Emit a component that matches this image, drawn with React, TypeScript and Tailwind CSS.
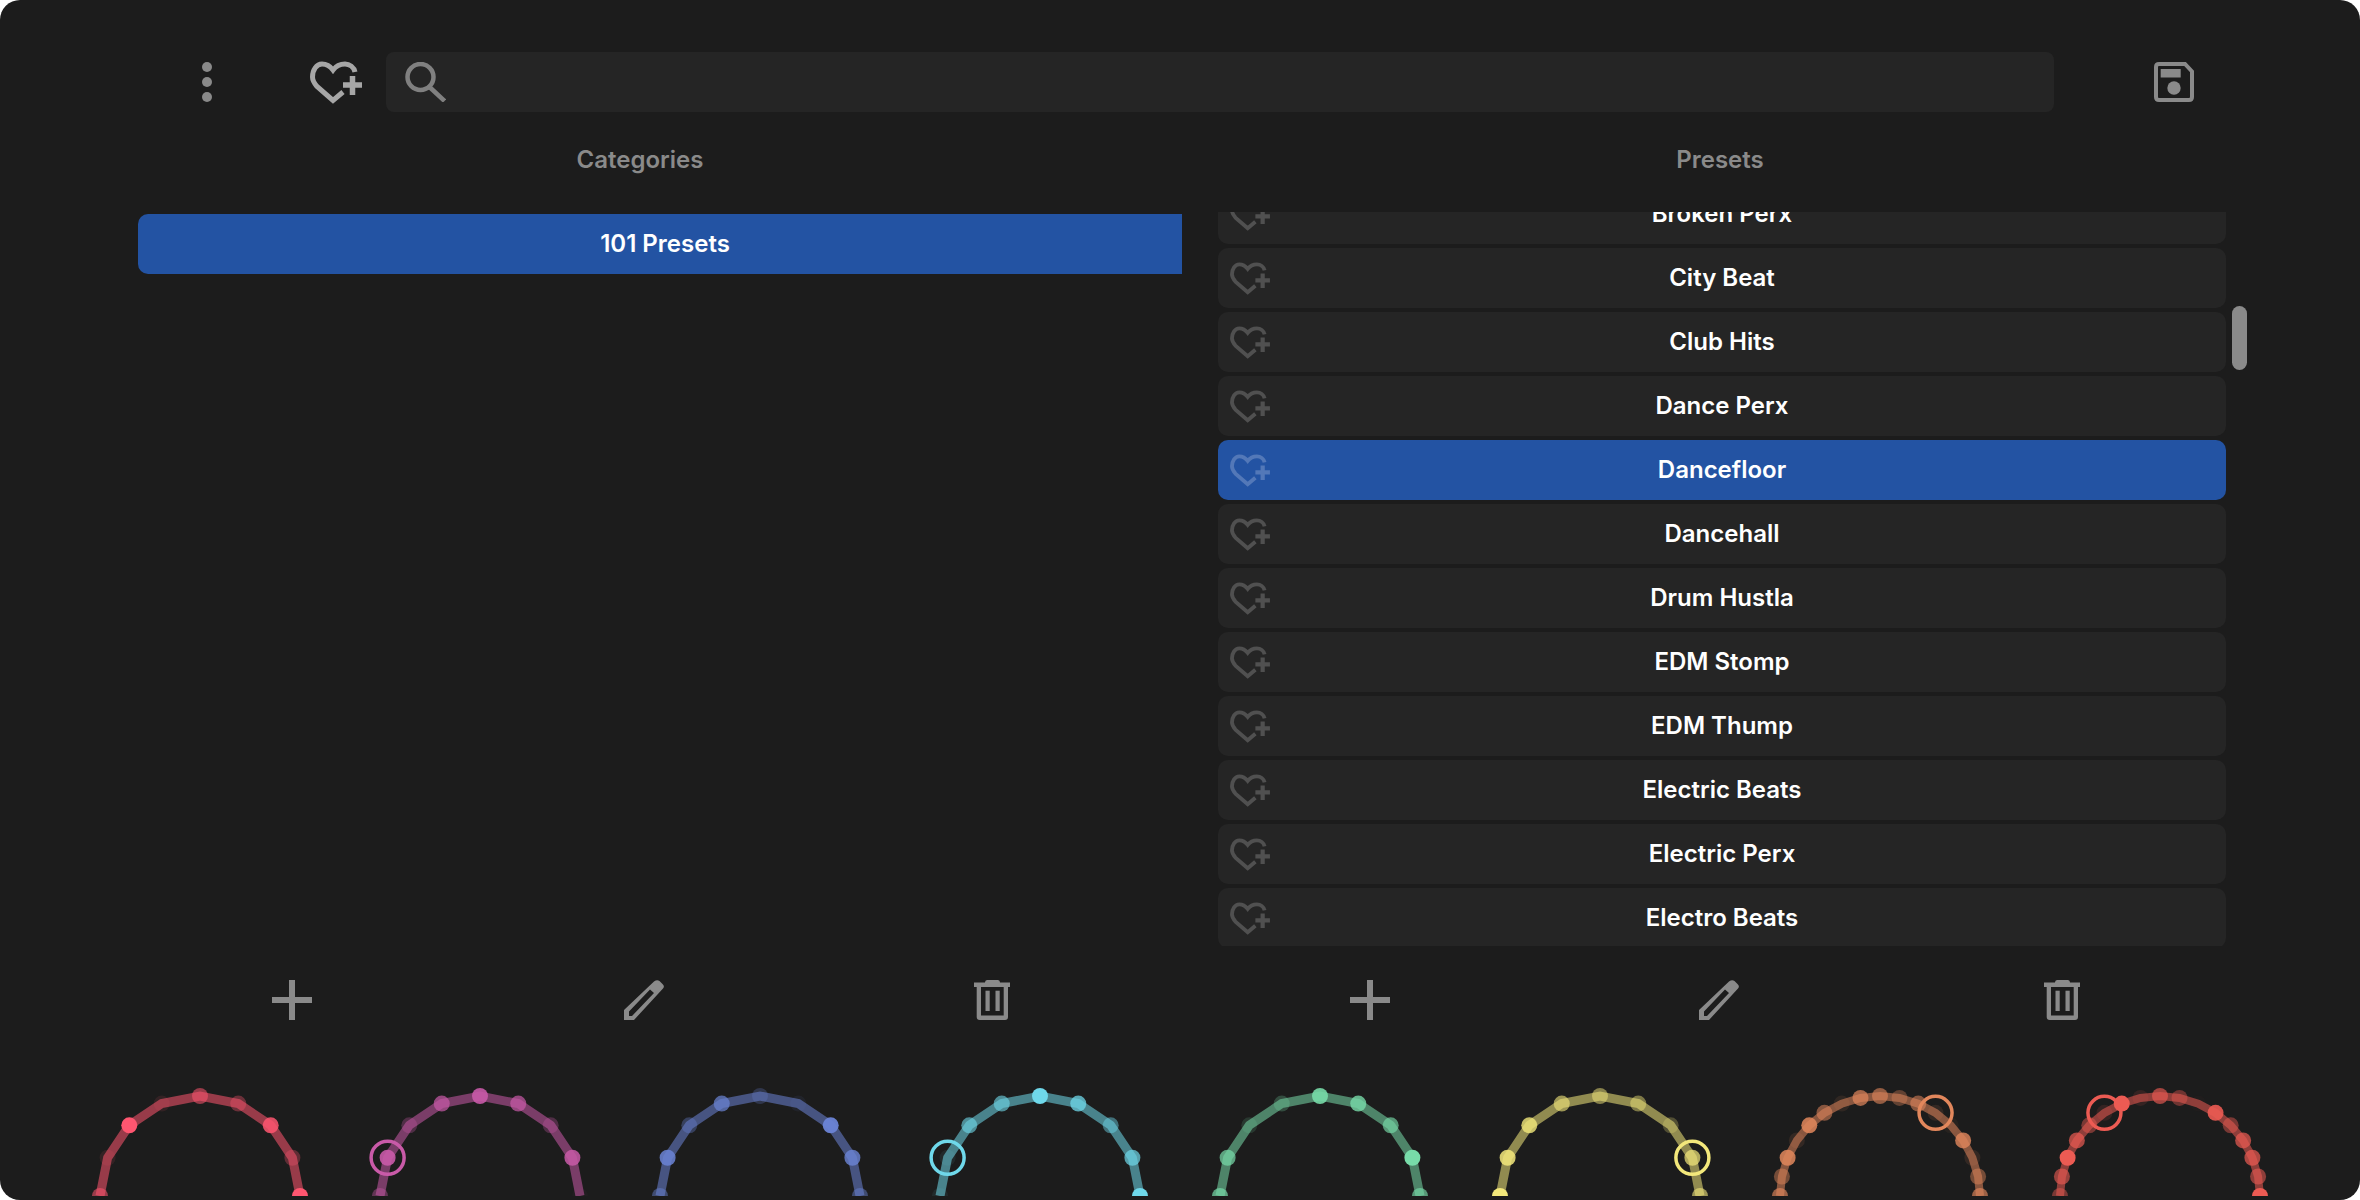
const presets = [
  "Broken Perx",
  "City Beat",
  "Club Hits",
  "Dance Perx",
  "Dancefloor",
  "Dancehall",
  "Drum Hustla",
  "EDM Stomp",
  "EDM Thump",
  "Electric Beats",
  "Electric Perx",
  "Electro Beats",
];

type Arc = { color: string; dots: number[]; ring: number; width: number };

// dot opacity runs left to right along the half circle
const arcs: Arc[] = [
  { color: "#ff5670", dots: [0.55, 0.1, 1, 0.1, 0.55, 0.35, 0.85, 0.3, 1], ring: -1, width: 9 },
  { color: "#c95aa8", dots: [0.4, 0.9, 0.3, 0.7, 0.9, 0.7, 0.3, 0.85, 0.03], ring: 1, width: 9 },
  { color: "#6b84d6", dots: [0.45, 0.85, 0.35, 0.7, 0.25, 0.08, 0.95, 0.8, 0.45], ring: -1, width: 9 },
  { color: "#6fd8ea", dots: [0.08, 0.08, 0.6, 0.6, 1, 0.75, 0.45, 0.7, 1], ring: 1, width: 9 },
  { color: "#78dba9", dots: [0.7, 0.7, 0.15, 0.25, 0.9, 0.8, 0.65, 1, 0.65], ring: -1, width: 9 },
  { color: "#f3e87b", dots: [1, 0.85, 0.8, 0.6, 0.5, 0.45, 0.25, 0.7, 0.6], ring: 7, width: 9 },
  {
    color: "#e2875c",
    dots: [0.65, 0.45, 0.85, 0.12, 0.85, 0.55, 0.1, 0.7, 0.6, 0.35, 0.55, 0.12, 0.06, 0.8, 0.12, 0.45, 0.65],
    ring: 11,
    width: 8,
  },
  {
    color: "#ec5b53",
    dots: [0.45, 0.6, 1, 0.7, 0.45, 0.12, 1, 0.12, 0.65, 0.4, 0.02, 0.9, 0.45, 0.7, 0.7, 0.55, 1],
    ring: 5,
    width: 8,
  },
];

function point(index: number, count: number) {
  const angle = Math.PI - (index / (count - 1)) * Math.PI;
  return {
    x: 140 + 100 * Math.cos(angle),
    y: 112 - 100 * Math.sin(angle),
  };
}

function ArcKnob({ arc }: { arc: Arc }) {
  const count = arc.dots.length;
  const points = arc.dots.map((_, i) => point(i, count));
  return (
    <svg width="280" height="112" viewBox="0 0 280 112" className="shrink-0">
      <polyline
        points={points.map((p) => `${p.x},${p.y}`).join(" ")}
        fill="none"
        stroke={arc.color}
        strokeWidth={arc.width}
        strokeOpacity="0.55"
      />
      {points.map((p, i) => (
        <circle key={i} cx={p.x} cy={p.y} r="8" fill={arc.color} fillOpacity={arc.dots[i]} />
      ))}
      {arc.ring >= 0 && (
        <circle
          cx={points[arc.ring].x}
          cy={points[arc.ring].y}
          r="16.5"
          fill="none"
          stroke={arc.color}
          strokeWidth="3.5"
        />
      )}
    </svg>
  );
}

function HeartPlus({ className }: { className: string }) {
  return (
    <svg viewBox="0 0 52 43" className={className} fill="none" stroke="currentColor">
      <path
        d="M45 11C44 6 39.5 3 35 3C30 3 26 5 23 9C20 5 16 3 12 3C6.5 3 2.5 9 2.5 16C2.5 19 4 22 7 25.5L23 39.5L33 31"
        strokeWidth="5"
      />
      <path d="M33 24H52M42.5 15V34" strokeWidth="5.5" />
    </svg>
  );
}

function SearchIcon() {
  return (
    <svg viewBox="0 0 41 40" className="h-10 w-[41px] text-[#808080]" fill="none" stroke="currentColor">
      <circle cx="15.5" cy="15" r="13" strokeWidth="4.5" />
      <path d="M24.5 25L39.5 39" strokeWidth="4.5" />
    </svg>
  );
}

function SaveIcon() {
  return (
    <svg viewBox="0 0 40 40" className="h-10 w-10 text-[#8a8a8a]" fill="currentColor">
      <path
        fill="none"
        stroke="currentColor"
        strokeWidth="4"
        d="M5 2H31L38 9.5V35Q38 38 35 38H5Q2 38 2 35V5Q2 2 5 2Z"
      />
      <rect x="6.7" y="7" width="20" height="8.5" />
      <circle cx="20" cy="26" r="6.7" />
    </svg>
  );
}

function PlusIcon() {
  return (
    <svg viewBox="0 0 40 40" className="h-10 w-10 text-[#8a8a8a]" fill="currentColor">
      <path d="M17 0H23V17H40V23H23V40H17V23H0V17H17Z" />
    </svg>
  );
}

function PencilIcon() {
  return (
    <svg viewBox="0 0 40 40" className="h-10 w-10 text-[#8a8a8a]" fill="currentColor">
      <path
        fillRule="evenodd"
        d="M0 30L30 1.5Q33 -0.5 35.5 1L38.5 4Q41 6 39 8.5L10 40H0ZM5 31.5V36H8L30 13L26 9.5Z"
      />
    </svg>
  );
}

function TrashIcon() {
  return (
    <svg viewBox="0 0 36 40" className="h-10 w-9 text-[#8a8a8a]" fill="currentColor">
      <path d="M11 2.5Q11 0 13 0H24Q26 0 26 2.5H36V7H0V2.5Z" />
      <path
        fillRule="evenodd"
        d="M2.7 6H34V37Q34 40 31 40H5.7Q2.7 40 2.7 37ZM7 7V35.5H29.7V7Z"
      />
      <rect x="11.5" y="10.7" width="4.2" height="20.3" />
      <rect x="21.5" y="10.7" width="4.2" height="20.3" />
    </svg>
  );
}

function PresetRow({ name, selected }: { name: string; selected: boolean }) {
  return (
    <div
      className={`grid h-[60px] shrink-0 grid-cols-[1fr_auto_1fr] items-center rounded-[10px] px-3 ${
        selected ? "bg-[#2353a3]" : "bg-[#252525]"
      }`}
    >
      <HeartPlus className={`h-[33px] w-10 ${selected ? "text-[#5378b8]" : "text-[#505050]"}`} />
      <span className="text-white">{name}</span>
    </div>
  );
}

export default function App() {
  return (
    <div className="h-[1200px] w-[2360px] bg-white font-['Inter','Noto_Sans',sans-serif] text-[24px] leading-9 font-semibold">
      <div className="flex h-full flex-col overflow-hidden rounded-[20px] bg-[#1c1c1c]">
        {/* toolbar */}
        <div className="mt-[52px] flex h-[60px] items-center">
          <div className="ml-[202px] flex h-10 w-2.5 flex-col justify-between">
            <span className="h-2.5 w-2.5 rounded-full bg-[#8a8a8a]" />
            <span className="h-2.5 w-2.5 rounded-full bg-[#8a8a8a]" />
            <span className="h-2.5 w-2.5 rounded-full bg-[#8a8a8a]" />
          </div>
          <div className="ml-[98px] text-[#a6a6a6]">
            <HeartPlus className="h-[43px] w-[52px]" />
          </div>
          <div className="ml-6 flex h-[60px] w-[1668px] items-center rounded-lg bg-[#252525] pl-[19px]">
            <SearchIcon />
          </div>
          <div className="ml-[100px]">
            <SaveIcon />
          </div>
        </div>

        {/* column titles */}
        <div className="mt-[30px] flex text-[#8a8a8a]">
          <div className="ml-[138px] w-[1004px] text-center">Categories</div>
          <div className="ml-[76px] w-[1004px] text-center">Presets</div>
        </div>

        {/* lists */}
        <div className="mt-[34px] flex h-[734px]">
          <div className="ml-[138px] w-[1044px] pt-0.5">
            <div className="flex h-[60px] items-center justify-center rounded-l-[10px] bg-[#2353a3] pl-2.5 text-white">
              101 Presets
            </div>
          </div>
          <div className="ml-9 h-full w-[1008px] overflow-hidden">
            <div className="-mt-[28px] flex flex-col gap-1">
              {presets.map((name) => (
                <PresetRow key={name} name={name} selected={name === "Dancefloor"} />
              ))}
            </div>
          </div>
          <div className="ml-1.5 w-[15px] pt-[94px]">
            <div className="h-16 rounded-full bg-[#8a8a8a]" />
          </div>
        </div>

        {/* action buttons */}
        <div className="mt-[34px] flex h-10">
          <div className="ml-[272px]">
            <PlusIcon />
          </div>
          <div className="ml-[312px]">
            <PencilIcon />
          </div>
          <div className="ml-[310px]">
            <TrashIcon />
          </div>
          <div className="ml-[340px]">
            <PlusIcon />
          </div>
          <div className="ml-[309px]">
            <PencilIcon />
          </div>
          <div className="ml-[305px]">
            <TrashIcon />
          </div>
        </div>

        {/* knobs */}
        <div className="mt-[64px] flex pl-[60px]">
          {arcs.map((arc) => (
            <ArcKnob key={arc.color} arc={arc} />
          ))}
        </div>
      </div>
    </div>
  );
}
